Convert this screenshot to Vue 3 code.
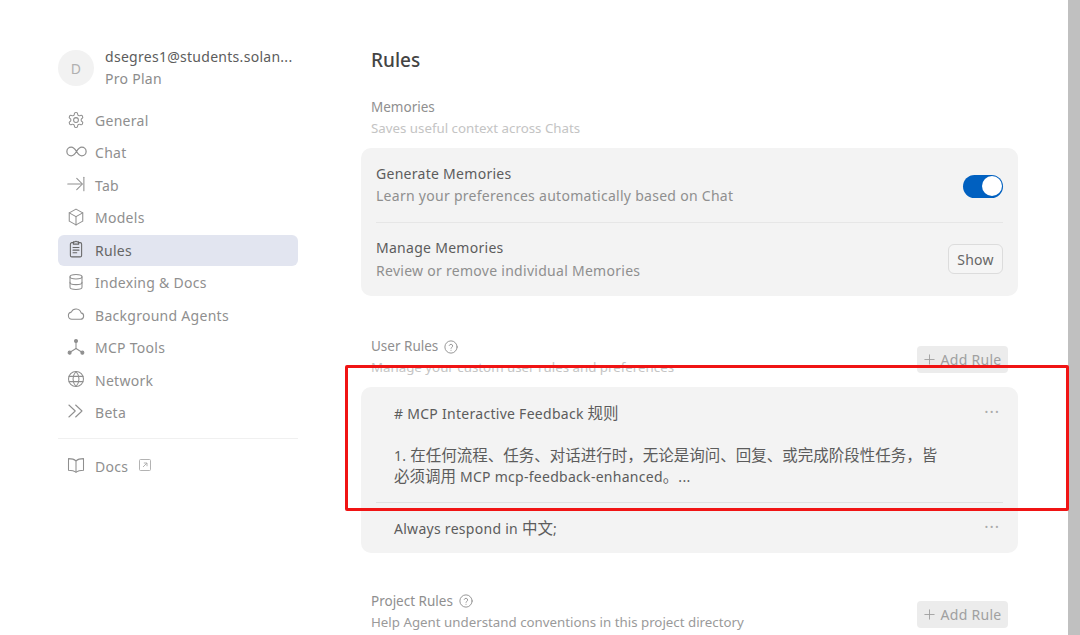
<script setup>
const navTop = [
  { label: 'General', icon: 'general' },
  { label: 'Chat', icon: 'chat' },
  { label: 'Tab', icon: 'tab' },
  { label: 'Models', icon: 'models' },
  { label: 'Rules', icon: 'rules', active: true },
  { label: 'Indexing & Docs', icon: 'indexing' },
  { label: 'Background Agents', icon: 'cloud' },
  { label: 'MCP Tools', icon: 'mcp' },
  { label: 'Network', icon: 'globe' },
  { label: 'Beta', icon: 'beta' }
]
const icons = {
  general: ['M12.22 2h-.44a2 2 0 0 0-2 2v.18a2 2 0 0 1-1 1.73l-.43.25a2 2 0 0 1-2 0l-.15-.08a2 2 0 0 0-2.73.73l-.22.38a2 2 0 0 0 .73 2.73l.15.1a2 2 0 0 1 1 1.72v.51a2 2 0 0 1-1 1.74l-.15.09a2 2 0 0 0-.73 2.73l.22.38a2 2 0 0 0 2.73.73l.15-.08a2 2 0 0 1 2 0l.43.25a2 2 0 0 1 1 1.73V20a2 2 0 0 0 2 2h.44a2 2 0 0 0 2-2v-.18a2 2 0 0 1 1-1.73l.43-.25a2 2 0 0 1 2 0l.15.08a2 2 0 0 0 2.73-.73l.22-.39a2 2 0 0 0-.73-2.73l-.15-.08a2 2 0 0 1-1-1.74v-.5a2 2 0 0 1 1-1.74l.15-.09a2 2 0 0 0 .73-2.73l-.22-.38a2 2 0 0 0-2.73-.73l-.15.08a2 2 0 0 1-2 0l-.43-.25a2 2 0 0 1-1-1.73V4a2 2 0 0 0-2-2z', 'M12 8.800a3.200 3.200 0 1 0 0 6.400 3.200 3.200 0 0 0 0-6.400z'],
  chat: ['M6 7a5 5 0 0 0 0 10c2.800 0 4.400-2.400 6-5s3.200-5 6-5a5 5 0 0 1 0 10c-2.800 0-4.400-2.400-6-5S8.800 7 6 7z'],
  tab: ['M1 12h19', 'M13 4.500 20.500 12 13 19.500', 'M22.500 3v18'],
  models: ['M12 1.500 3 6.500v11l9 5 9-5v-11z', 'M3 6.500l9 5 9-5', 'M12 11.500v11'],
  rules: ['M8.500 3.500H6.500a2 2 0 0 0-2 2V20.500a2 2 0 0 0 2 2h11a2 2 0 0 0 2-2V5.500a2 2 0 0 0-2-2h-2', 'M8.500 5.500V2.500h2.200a1.400 1.400 0 0 1 2.600 0h2.200v3z', 'M8 10h8', 'M8 13.500h8', 'M8 17h5'],
  indexing: ['M12 2c-4.400 0-8 1.300-8 3s3.600 3 8 3 8-1.300 8-3-3.600-3-8-3z', 'M4 5v14c0 1.700 3.600 3 8 3s8-1.300 8-3V5', 'M4 12.500c0 1.700 3.600 3 8 3s8-1.300 8-3'],
  cloud: ['M6.500 19a4.800 4.800 0 0 1-.8-9.500A7 7 0 0 1 18.800 10.500 4.300 4.300 0 0 1 18 19z'],
  mcp: ['M12 5v9', 'M12 14l-8 5', 'M12 14l8 5'],
  globe: ['M12 2a10 10 0 1 0 0 20 10 10 0 0 0 0-20z', 'M2.800 8.500h18.400', 'M2.800 15.500h18.400', 'M12 2c-5.300 5.800-5.300 14.200 0 20', 'M12 2c5.300 5.800 5.300 14.200 0 20'],
  beta: ['M2.500 4 11 12l-8.500 8', 'M11.500 4 20 12l-8.500 8'],
  docs: ['M12 6.500C9.800 4.500 6 3.500 2 3.500V19c4 0 7.800 .8 10 2.500 2.200-1.700 6-2.500 10-2.500V3.500c-4 0-7.800 1-10 3z', 'M12 6.500v15']
}
</script>

<template>
  <div class="page">
    <aside class="sidebar">
      <div class="account">
        <div class="avatar">D</div>
        <div class="account-text">
          <div class="email">dsegres1@students.solan...</div>
          <div class="plan">Pro Plan</div>
        </div>
      </div>
      <nav class="nav">
        <div v-for="item in navTop" :key="item.label" class="nav-item" :class="{ active: item.active }">
          <svg class="nav-icon" :class="'icon-' + item.icon" viewBox="0 0 24 24" fill="none" stroke="currentColor" stroke-width="1.400" stroke-linejoin="round" stroke-linecap="round">
            <path v-for="d in icons[item.icon]" :key="d" :d="d" />
            <template v-if="item.icon === 'mcp'">
              <circle cx="12" cy="4" r="2" fill="currentColor" />
              <circle cx="3.500" cy="19.500" r="2" fill="currentColor" />
              <circle cx="20.500" cy="19.500" r="2" fill="currentColor" />
            </template>
          </svg>
          <span>{{ item.label }}</span>
        </div>
      </nav>
      <div class="sep"></div>
      <div class="nav-item docs">
        <svg class="nav-icon" viewBox="0 0 24 24" fill="none" stroke="currentColor" stroke-width="1.400" stroke-linejoin="round" stroke-linecap="round">
          <path v-for="d in icons.docs" :key="d" :d="d" />
        </svg>
        <span>Docs</span>
        <svg class="ext" viewBox="0 0 12 12" fill="none" stroke="currentColor" stroke-width="0.900">
          <rect x="0.500" y="0.500" width="11" height="11" rx="1" />
          <path d="M4 8l4-4M4.800 4H8v3.200" />
        </svg>
      </div>
    </aside>

    <main class="main">
      <h1 class="title">Rules</h1>

      <div class="head">
        <div class="head-text">
          <div class="head-title">Memories</div>
          <div class="head-sub">Saves useful context across Chats</div>
        </div>
      </div>
      <section class="card">
        <div class="row first">
          <div>
            <div class="row-title">Generate Memories</div>
            <div class="row-sub">Learn your preferences automatically based on Chat</div>
          </div>
          <div class="toggle"><div class="knob"></div></div>
        </div>
        <div class="row second">
          <div>
            <div class="row-title">Manage Memories</div>
            <div class="row-sub low">Review or remove individual Memories</div>
          </div>
          <button class="show">Show</button>
        </div>
      </section>

      <div class="head user">
        <div class="head-text">
          <div class="head-title">User Rules
            <svg class="help" viewBox="0 0 24 24" fill="none" stroke="currentColor" stroke-width="1.600" stroke-linecap="round">
              <circle cx="12" cy="12" r="10.500" />
              <path d="M9 9.300a3 3 0 0 1 5.800 1c0 2-2.800 2.400-2.800 4" />
              <path d="M12 17.600v.1" />
            </svg>
          </div>
          <div class="head-sub">Manage your custom user rules and preferences</div>
        </div>
        <button class="add">
          <svg viewBox="0 0 12 12" fill="none" stroke="currentColor" stroke-width="1"><path d="M6 .5v11M.5 6h11" /></svg>
          Add Rule
        </button>
      </div>
      <section class="card rules">
        <div class="rule first-rule">
          <div class="rule-text">
            <p># MCP Interactive Feedback <span class="cjk">规则</span></p>
            <p class="blank"></p>
            <p>1. <span class="cjk">在任何流程、任务、对话进行时，无论是询问、回复、或完成阶段性任务，皆必须调用</span> MCP mcp-feedback-enhanced<span class="cjk">。</span>...</p>
          </div>
          <span class="dots">···</span>
        </div>
        <div class="rule second-rule">
          <div class="rule-text"><p>Always respond in <span class="cjk">中文</span>;</p></div>
          <span class="dots">···</span>
        </div>
      </section>

      <div class="head project">
        <div class="head-text">
          <div class="head-title">Project Rules
            <svg class="help" viewBox="0 0 24 24" fill="none" stroke="currentColor" stroke-width="1.600" stroke-linecap="round">
              <circle cx="12" cy="12" r="10.500" />
              <path d="M9 9.300a3 3 0 0 1 5.800 1c0 2-2.800 2.400-2.800 4" />
              <path d="M12 17.600v.1" />
            </svg>
          </div>
          <div class="head-sub project-sub">Help Agent understand conventions in this project directory</div>
        </div>
        <button class="add">
          <svg viewBox="0 0 12 12" fill="none" stroke="currentColor" stroke-width="1"><path d="M6 .5v11M.5 6h11" /></svg>
          Add Rule
        </button>
      </div>
    </main>

    <div class="scrollbar"></div>
    <div class="highlight"></div>
  </div>
</template>

<style scoped>
.page {
  position: relative;
  display: flex;
  height: 635px;
  width: 1080px;
  overflow: hidden;
  background: #fff;
  font-family: "Noto Sans", "Noto Sans CJK SC", sans-serif;
  font-size: 14px;
  line-height: 21px;
  letter-spacing: 0.280px;
  color: #555;
}
.sidebar {
  width: 240px;
  margin-left: 58px;
  padding-top: 46px;
  flex: none;
}
.account {
  display: flex;
  align-items: center;
  gap: 11px;
  height: 44px;
}
.avatar {
  width: 36px;
  height: 36px;
  border-radius: 50%;
  background: #f2f2f2;
  color: #b0b0b0;
  display: flex;
  align-items: center;
  justify-content: center;
  font-size: 14px;
}
.email { color: #5c5c5c; line-height: 22px; }
.plan { color: #8c8c8c; line-height: 22px; }
.nav {
  margin-top: 15px;
  display: flex;
  flex-direction: column;
  gap: 1.450px;
}
.nav-item {
  display: flex;
  align-items: center;
  height: 31px;
  padding-left: 9px;
  gap: 10px;
  color: #8f8f8f;
  border-radius: 6px;
}
.nav-item.active {
  background: #e2e5f0;
  color: #666;
}
.nav-icon {
  width: 18px;
  height: 18px;
  flex: none;
  margin-top: -2px;
}
.icon-chat {
  width: 21px;
  height: 21px;
  margin-left: -1px;
  margin-right: -2px;
}
.sep {
  height: 1px;
  background: #f0f0f0;
  margin-top: 10px;
  margin-bottom: 12px;
}
.ext {
  width: 12px;
  height: 12px;
  margin-left: 1px;
  margin-top: -2px;
  color: #aaa;
}
.main {
  width: 657px;
  margin-left: 63px;
  flex: none;
  padding-top: 46px;
}
.title {
  margin: 0 0 0 10px;
  font-size: 19px;
  line-height: 28px;
  font-weight: 500;
  letter-spacing: 0;
  color: #444;
}
.head {
  display: flex;
  justify-content: space-between;
  margin-top: 23px;
  margin-bottom: 9px;
  padding: 0 10px;
}
.head.user { margin-top: 40px; }
.head.project { margin-top: 37.500px; margin-bottom: 0; }
.head-title {
  color: #8f8f8f;
  font-size: 13.500px;
  letter-spacing: 0;
  display: flex;
  align-items: center;
  gap: 6px;
}
.head-sub {
  color: #c4c4c4;
  font-size: 13.300px;
  letter-spacing: 0;
}
.project-sub { color: #9a9a9a; }
.help { width: 14px; height: 14px; }
.card {
  background: #f3f3f3;
  border-radius: 10px;
}
.row {
  display: flex;
  justify-content: space-between;
  align-items: center;
  margin: 0 15px;
}
.row.first {
  height: 74px;
  border-bottom: 1px solid #e6e6e6;
  box-sizing: content-box;
}
.row.second { height: 73px; }
.row-title { color: #5c5c5c; line-height: 22px; }
.row-sub { color: #8f8f8f; line-height: 22px; }
.row-sub.low { line-height: 23px; }
.toggle {
  width: 40px;
  height: 23px;
  margin-top: 2px;
  border-radius: 12px;
  background: #0060c0;
  position: relative;
}
.knob {
  position: absolute;
  right: 1.500px;
  top: 1.500px;
  width: 20px;
  height: 20px;
  border-radius: 50%;
  background: #fff;
}
.show {
  width: 55px;
  height: 30px;
  margin-top: -1px;
  border: 1px solid #dcdcdc;
  border-radius: 6px;
  background: #f5f5f5;
  color: #666;
  font: inherit;
  letter-spacing: inherit;
  padding: 0;
}
.add {
  width: 91px;
  height: 27px;
  margin-top: 10px;
  background: #ececec;
  border: none;
  border-radius: 4px;
  color: #a0a0a0;
  font: inherit;
  letter-spacing: inherit;
  display: flex;
  align-items: center;
  justify-content: center;
  gap: 6px;
  padding: 0;
}
.add svg { width: 11px; height: 11px; }
.rule {
  position: relative;
  margin: 0 15px;
  padding-left: 18px;
}
.first-rule {
  height: 116px;
  padding-top: 15.500px;
  box-sizing: border-box;
  border-bottom: 1px solid #e0e0e0;
}
.second-rule { padding-top: 14.500px; height: 50px; box-sizing: border-box; }
.rule-text { width: 552px; color: #5c5c5c; }
.rule-text p { margin: 0; }
.cjk { font-size: 15.500px; letter-spacing: 0; }
.blank { height: 21px; }
.dots {
  position: absolute;
  right: 3px;
  top: 15px;
  color: #aaa;
  font-size: 16px;
  line-height: 21px;
  letter-spacing: 1px;
}
.second-rule .dots { top: 14px; }
.scrollbar {
  position: absolute;
  right: 0;
  top: 0;
  bottom: 0;
  width: 12px;
  background: #c0c0c0;
}
.highlight {
  position: absolute;
  left: 345px;
  top: 365px;
  width: 724px;
  height: 146px;
  box-sizing: border-box;
  border: 3px solid #f01414;
  border-radius: 2px;
}
</style>
